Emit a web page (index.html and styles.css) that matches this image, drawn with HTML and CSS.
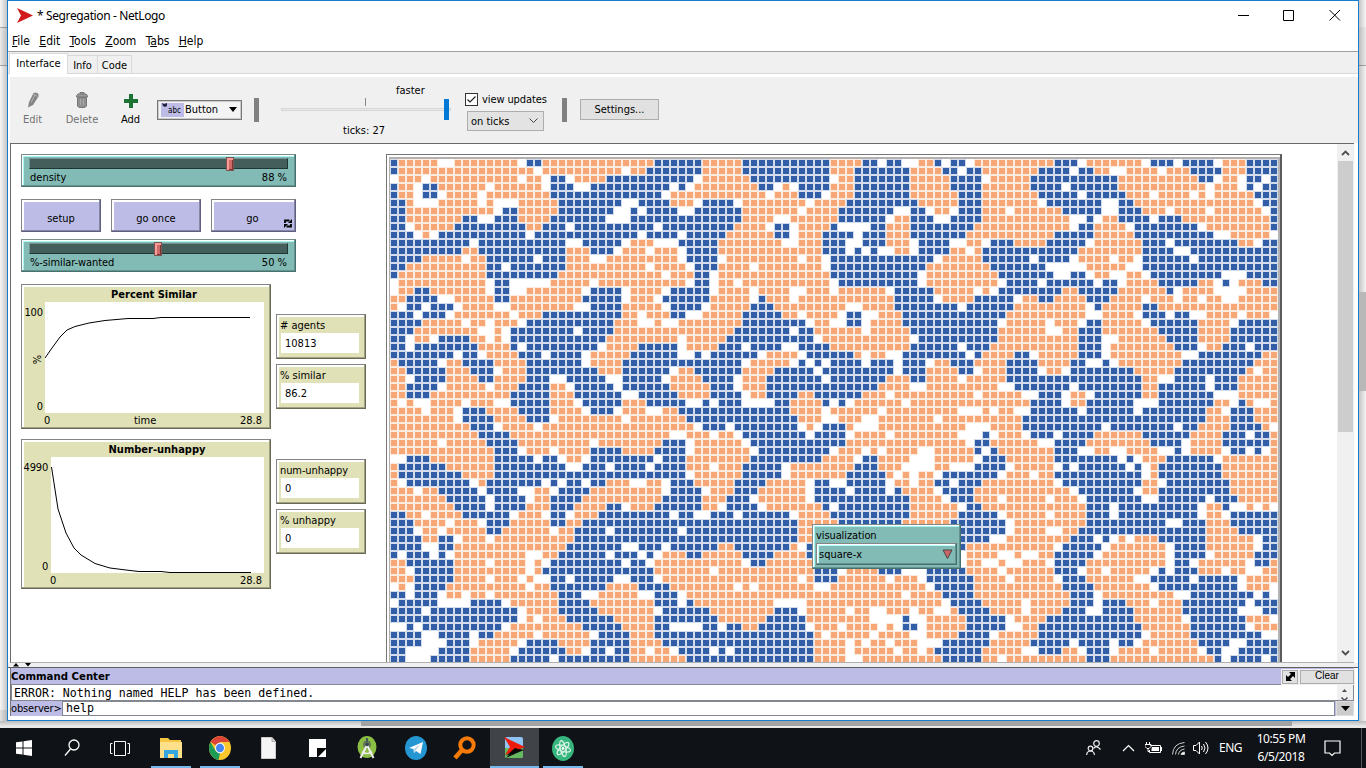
FILE: index.html
```html
<!DOCTYPE html>
<html lang="en">
<head>
<meta charset="utf-8">
<title>Segregation - NetLogo</title>
<link rel="stylesheet" href="styles.css">
</head>
<body>
<div class="desktop">
  <div class="back-left"></div>
  <div class="back-right"><span class="back-thumb"></span></div>
  <div class="back-bottom"><span class="back-scroll"></span></div>

  <main class="window">
    <header class="titlebar">
      <svg class="app-icon" width="16" height="15" viewBox="0 0 16 15"><path d="M0 0L16 7.500L0 15L4 7.500Z" fill="#d11a1c"/></svg>
      <span class="title-text">* Segregation - NetLogo</span>
      <svg class="win-buttons" width="110" height="14" viewBox="0 0 110 14" fill="none" stroke="#000"><path d="M1 7.500H12M46.500 2.500H56.500V12.500H46.500ZM92.500 2L103 12.500M103 2L92.500 12.500"/></svg>
    </header>
    <nav class="menubar"><span><u>F</u>ile</span><span><u>E</u>dit</span><span><u>T</u>ools</span><span><u>Z</u>oom</span><span>T<u>a</u>bs</span><span><u>H</u>elp</span></nav>
    <div class="tabs"><span class="tab active">Interface</span><span class="tab info">Info</span><span class="tab code">Code</span></div>

    <section class="toolbar">
      <div class="tool edit off">
        <svg width="12" height="16" viewBox="0 0 12 16"><path d="M1 15.500L2 10L6.500 1L9 .500L11.500 2V4.500L6 13Z" fill="#858585"/><path d="M4 10.500L8 3M6.500 2L10.500 4.500" stroke="#b5b5b5" fill="none"/></svg>
        <span>Edit</span>
      </div>
      <div class="tool delete off">
        <svg width="12" height="16" viewBox="0 0 12 16"><path d="M4 2V.500H8V2M.500 3.500L2 2H10L11.500 3.500V5H.500Z" fill="#999" stroke="#777"/><path d="M1.500 5.500H10.500V14L9 15.500H3L1.500 14Z" fill="#8f8f8f" stroke="#777"/><path d="M4.500 7V13M7.500 7V13" stroke="#aaa"/></svg>
        <span>Delete</span>
      </div>
      <div class="tool add">
        <svg width="14" height="14" viewBox="0 0 14 14"><path d="M5 0H9V5H14V9H9V14H5V9H0V5H5Z" fill="#1b7434"/></svg>
        <span>Add</span>
      </div>
      <div class="widget-combo">
        <span class="abc"><svg width="6" height="5" viewBox="0 0 6 5"><path d="M0 0L2 1L5 0V3L3 4L1 3Z" fill="#224"/></svg>abc</span>
        <span class="combo-text">Button</span>
        <svg width="8" height="5" viewBox="0 0 8 5"><path d="M0 0H8L4 5Z"/></svg>
      </div>
      <i class="sep"></i>
      <div class="speed">
        <span class="faster">faster</span>
        <div class="speed-track"><i class="speed-tick"></i><i class="speed-thumb"></i></div>
        <span class="ticks">ticks: 27</span>
      </div>
      <div class="updates">
        <label class="check"><svg width="13" height="13" viewBox="0 0 13 13"><rect x=".5" y=".5" width="12" height="12" fill="#fff" stroke="#333"/><path d="M2.500 6.500L5 9L10.500 3.500" fill="none" stroke="#222" stroke-width="1.200"/></svg><span>view updates</span></label>
        <div class="update-mode"><span>on ticks</span><svg width="9" height="6" viewBox="0 0 9 6" fill="none" stroke="#444"><path d="M.500 .500L4.500 4.500L8.500 .500"/></svg></div>
      </div>
      <i class="sep second"></i>
      <div class="settings">Settings...</div>
    </section>

    <section class="canvas">
      <div class="w slider s1"><div class="channel"><i class="knob k88"></i></div><p><span>density</span><span>88 %</span></p></div>
      <div class="w button b1"><span>setup</span></div>
      <div class="w button b2"><span>go once</span></div>
      <div class="w button b3"><span>go</span>
        <svg class="forever" width="8" height="9" viewBox="0 0 8 9"><path d="M1 4V1.500H5.500M7 5V7.500H2.500" fill="none" stroke="#000" stroke-width="1.800"/><path d="M4 4H8V0ZM4 5H0V9Z"/></svg></div>
      <div class="w slider s2"><div class="channel"><i class="knob k50"></i></div><p><span class="tight">%-similar-wanted</span><span>50 %</span></p></div>

      <div class="w plot p1">
        <h2>Percent Similar</h2>
        <div class="plot-body">
          <div class="y-axis"><span>100</span><span class="y-name">%</span><span>0</span></div>
          <svg width="219" height="111" viewBox="0 0 219 111"><rect width="219" height="111" fill="#fff"/><path d="M0 56L7 46L15 35L22 28L30 24.500L44 21L60 18.500L83 16.500H108L116 15.500H205" fill="none" stroke="#000"/></svg>
        </div>
        <div class="x-axis"><span>0</span><span>time</span><span>28.8</span></div>
      </div>
      <div class="w plot p2">
        <h2>Number-unhappy</h2>
        <div class="plot-body">
          <div class="y-axis"><span>4990</span><span>0</span></div>
          <svg width="213" height="116" viewBox="0 0 213 116"><rect width="213" height="116" fill="#fff"/><path d="M.500 10L7 52L15 76L23 91L30 98L44 106.500L59 111L75 113L88 114.500H110L119 115.500H200" fill="none" stroke="#000"/></svg>
        </div>
        <div class="x-axis"><span>0</span><span>28.8</span></div>
      </div>

      <div class="w monitor m1"><span># agents</span><b>10813</b></div>
      <div class="w monitor m2"><span>% similar</span><b>86.2</b></div>
      <div class="w monitor m3"><span class="tight">num-unhappy</span><b>0</b></div>
      <div class="w monitor m4"><span>% unhappy</span><b>0</b></div>

      <div class="view"><svg id="world" width="888" height="504" viewBox="0 0 888 504" shape-rendering="crispEdges"></svg></div>

      <div class="w chooser"><span class="tight">visualization</span><div class="choice"><span>square-x</span><svg width="11" height="11" viewBox="0 0 11 11"><path d="M1 1H10L5.500 9.500Z" fill="#cc6666" stroke="#444"/></svg></div></div>

      <div class="scrollbar"><svg width="9" height="6" viewBox="0 0 9 6"><path d="M1 5L4.500 1.500L8 5" fill="none" stroke="#505050" stroke-width="1.800"/></svg><i></i><svg width="9" height="6" viewBox="0 0 9 6"><path d="M1 1L4.500 4.500L8 1" fill="none" stroke="#505050" stroke-width="1.800"/></svg></div>
    </section>

    <div class="divider"><svg width="20" height="4" viewBox="0 0 20 4"><path d="M0 3.500L3 0L6 3.500ZM12 0H18L15 3.500Z"/></svg></div>
    <section class="command">
      <div class="command-head"><strong>Command Center</strong>
        <span class="expand"><svg width="9" height="9" viewBox="0 0 9 9"><path d="M3 0H9V6L7 4L4 7L6 9H0V3L2 5L5 2Z"/></svg></span>
        <span class="clear">Clear</span></div>
      <div class="output"><span>ERROR: Nothing named HELP has been defined.</span>
        <svg width="16" height="15" viewBox="0 0 16 15"><rect width="16" height="15" fill="#f0f0f0"/><path d="M5 7L7.500 4L10 7Z" fill="#505050"/><path d="M4.500 12.500L7.500 15.500L10.500 12.500" fill="none" stroke="#505050" stroke-width="1.500"/></svg></div>
      <div class="prompt"><label>observer&gt;</label><div class="entry">help</div><span class="history"><svg width="9" height="5" viewBox="0 0 9 5"><path d="M0 0H9L4.500 5Z"/></svg></span></div>
    </section>
  </main>

  <footer class="taskbar">
    <div class="task"><svg width="16" height="16" viewBox="0 0 16 16" fill="#fff"><path d="M0 2.300L6.500 1.400V7.500H0ZM7.500 1.200L16 0V7.500H7.500ZM0 8.500H6.500V14.600L0 13.700ZM7.500 8.500H16V16L7.500 14.800Z"/></svg></div>
    <div class="task search"><svg width="16" height="18" viewBox="0 0 16 18" fill="none" stroke="#fff" stroke-width="1.300"><circle cx="10" cy="6" r="5"/><path d="M6.500 10L1 16.500"/></svg></div>
    <div class="task overview"><svg width="20" height="16" viewBox="0 0 20 16" fill="none" stroke="#fff"><path d="M4.500 1.500H15.500V15.500H4.500ZM2.500 3.500H.500V13.500H2.500M17.500 3.500H19.500V13.500H17.500"/></svg></div>
    <div class="task open explorer"><svg width="22" height="20" viewBox="0 0 22 20"><path d="M0 0H8L10 2H21V20H0Z" fill="#f5c643"/><path d="M0 4H22V20H0Z" fill="#ffe08a"/><path d="M4 12H18V20H14V16H8V20H4Z" fill="#35a6e0"/></svg></div>
    <div class="task open chrome"><svg width="22" height="24" viewBox="0 0 22 22" preserveAspectRatio="none"><circle cx="11" cy="11" r="11" fill="#fbc72d"/><path d="M11 11L1.500 5.500A11 11 0 0 1 20.500 5.500H11Z" fill="#dc4437"/><path d="M1.500 5.500L6.500 13.500L11 16L9.500 21.900A11 11 0 0 1 1.500 5.500Z" fill="#1c9c57"/><circle cx="11" cy="11" r="5" fill="#f5f5f5"/><circle cx="11" cy="11" r="4" fill="#4584ee"/></svg></div>
    <div class="task"><svg width="15" height="22" viewBox="0 0 15 22"><path d="M.500 .500H11L14.500 4.500V21.500H.500Z" fill="#f5f5f5" stroke="#ccc"/><path d="M11 .500V4.500H14.500" fill="#ddd" stroke="#aaa"/></svg></div>
    <div class="task"><svg width="17" height="18" viewBox="0 0 17 18"><path d="M0 0H17V18H0Z" fill="#fff"/><path d="M8 18V9H17V10L9 18Z" fill="#05070a"/></svg></div>
    <div class="task"><svg width="20" height="24" viewBox="0 0 20 24"><ellipse cx="10" cy="11" rx="9.500" ry="11" fill="#8abf43"/><circle cx="10" cy="8.500" r="4" fill="#657a55"/><path d="M9 2H11V6H9Z" fill="#455a64"/><path d="M10 9L3.500 22M10 9L16.500 22" stroke="#eee" stroke-width="2"/><path d="M5 16Q10 19 15 16" fill="none" stroke="#eee" stroke-width="1.500"/><circle cx="10" cy="8.500" r="1.800" fill="#37474f"/></svg></div>
    <div class="task"><svg width="22" height="24" viewBox="0 0 22 24"><ellipse cx="11" cy="12" rx="11" ry="12" fill="#2497d3"/><path d="M4 12L18 6L15.500 18L11 15L9 17L8.500 13Z" fill="#fff"/><path d="M8.500 13L16 8L10.500 14.500L9 17Z" fill="#b8d6e8"/></svg></div>
    <div class="task"><svg width="24" height="24" viewBox="0 0 24 24" fill="none" stroke="#f67a08"><circle cx="14" cy="9" r="6.700" stroke-width="4"/><path d="M9 14L2 22" stroke-width="4.500"/></svg></div>
    <div class="task current"><svg width="22" height="22" viewBox="0 0 22 22"><rect x="1" y="0" width="18" height="21" rx="2" fill="#8fc4f4"/><path d="M1 11H19V20L17 21H2L1 20Z" fill="#65b95f"/><path d="M2 21L12 11L20 13L13 16Z" fill="#111"/><path d="M0 0L21 10L1 18L6 10Z" fill="#ee1b0d"/><path d="M2 19L11 11L17 13Z" fill="#070707"/></svg></div>
    <div class="task open"><svg width="22" height="25" viewBox="0 0 24 26" preserveAspectRatio="none"><ellipse cx="12" cy="13" rx="12" ry="13" fill="#36b67e"/><g fill="none" stroke="#dff5e9" stroke-width="1.200"><ellipse cx="12" cy="13" rx="8.500" ry="3" transform="rotate(15 12 13)"/><ellipse cx="12" cy="13" rx="8.500" ry="3" transform="rotate(75 12 13)"/><ellipse cx="12" cy="13" rx="8.500" ry="3" transform="rotate(-45 12 13)"/></g><circle cx="12" cy="13" r="1.500" fill="#fff"/></svg></div>
    <div class="tray">
      <svg class="people" width="15" height="16" viewBox="0 0 15 16" fill="none" stroke="#eee" stroke-width="1.200"><circle cx="10.500" cy="3.500" r="2.800"/><circle cx="4.500" cy="8.500" r="2.300"/><path d="M7.500 8.500Q10.500 5 14.500 9.500M.600 15Q1 11 4.500 11T8.500 15"/></svg>
      <svg class="chev" width="13" height="8" viewBox="0 0 13 8" fill="none" stroke="#fff" stroke-width="1.200"><path d="M1 7L6.500 1.500L12 7"/></svg>
      <svg class="battery" width="17" height="13" viewBox="0 0 17 13"><path d="M5.500 3.500H15.500V10.500H4.500V8" fill="none" stroke="#fff"/><path d="M7 5H14V9H6.500V7ZM16 5H17V9H16Z" fill="#fff"/><path d="M1.500 0V2.500M4.500 0V2.500M0 2.500H6V4.500L4 6.500H2L0 4.500ZM3 6V9.500H5" fill="none" stroke="#fff"/></svg>
      <svg class="wifi" width="13" height="13" viewBox="0 0 13 13" fill="none" stroke="#ccc"><path d="M.500 12.500Q1 1.500 12.500 .500M3.500 12.500Q4 5 12.500 4M6.500 12.500Q7 8 12.500 7"/><path d="M9 12.500Q9.500 10 12.500 10V12.500Z" fill="#fff"/></svg>
      <svg class="sound" width="17" height="14" viewBox="0 0 17 14" fill="none" stroke="#fff"><path d="M.500 4.500H3L6.500 1V13L3 9.500H.500ZM8.500 5Q10 7 8.500 9M10.500 3Q13.500 7 10.500 11M12.500 1Q17.500 7 12.500 13"/></svg>
      <span class="lang">ENG</span>
      <span class="clock"><span>10:55 PM</span><span>6/5/2018</span></span>
      <svg class="notice" width="17" height="17" viewBox="0 0 17 17" fill="none" stroke="#fff" stroke-width="1.200"><path d="M1 1H16V13H10.500L8 15.500L5.500 13H1Z"/></svg>
      <i class="show-desktop"></i>
    </div>
  </footer>
</div>
<script src="world.js"></script>
</body>
</html>
```
FILE: styles.css
```css
* { box-sizing: border-box; }
body { margin: 0; width: 1366px; height: 768px; overflow: hidden; font: 11px/13px "DejaVu Sans Condensed", "DejaVu Sans", sans-serif; font-stretch: condensed; color: #000; }
svg { display: block; flex: none; }
span { white-space: nowrap; }
.tight { letter-spacing: -.1px; }
.desktop { position: relative; width: 1366px; height: 768px; background: #e9e9e9; overflow: hidden; }
.back-left { position: absolute; left: 0; top: 0; width: 7px; height: 728px; background: linear-gradient(90deg, transparent, #0003), linear-gradient(#f6f6f6 27px, #aaa 27px 28px, #ebebeb 28px 65px, #aaa 65px 66px, #f7f7f7 66px 710px, #e3e3e3 710px); }
.back-right { position: absolute; right: 0; top: 0; width: 7px; height: 728px; background: linear-gradient(90deg, #0003, transparent), linear-gradient(#f7f7f7 27px, #ebebeb 27px 65px, #aaa 65px 66px, #f4f4f4 66px); }
.back-thumb { display: block; width: 7px; height: 99px; margin-top: 292px; background: #b8b8b8; }
.back-bottom { position: absolute; left: 0; top: 721px; width: 1366px; height: 7px; background: linear-gradient(#bbb, #e8e8e8 5px); }
.back-scroll { display: block; width: 931px; height: 5px; margin-left: 361px; background: #a3a3a3; }

.window { position: absolute; left: 7px; top: 0; width: 1352px; height: 721px; border: 1px solid #187ccc; background: #fff; display: flex; flex-direction: column; }
.titlebar { height: 30px; display: flex; align-items: center; padding: 0 11px 0 9px; font: 12px/16px "Noto Sans", sans-serif; }
.title-text { margin-left: 4px; letter-spacing: -.38px; flex: 1; }
.app-icon { margin-top: -1px; }
.win-buttons { margin-top: -2px; }
.menubar { height: 21px; border-bottom: 1px solid #a0a0a0; display: flex; gap: 9.300px; padding: 3px 0 0 4px; font: 12px/14px "DejaVu Sans Condensed", sans-serif; }
.menubar u { text-underline-offset: 1px; }
.tabs { height: 25px; display: flex; align-items: flex-end; background: linear-gradient(#f0f0f0 21px, #d9d9d9 21px 22px, #fff 22px); padding: 0 0 3px 1px; }
.tab { height: 19px; border: 1px solid #d9d9d9; text-align: center; line-height: 19px; margin-left: -1px; width: 31px; }
.tab.code { width: 35px; }
.tab.active { height: 21px; width: 59px; background: #fff; border-bottom: 0; line-height: 20px; margin-left: 0; }

.toolbar { height: 66px; margin-left: 2px; background: #f0f0f0; display: flex; align-items: center; padding-left: 12px; }
.tool { display: flex; flex-direction: column; align-items: center; gap: 5px; height: 34px; justify-content: flex-end; margin-top: -3px; }
.edit { width: 21px; } .delete { width: 32px; margin-left: 23px; } .add { width: 21px; margin-left: 22px; }
.off { color: #707070; }
.widget-combo { margin: -1px 0 0 16px; width: 85px; height: 20px; border: 1px solid #777; box-shadow: inset 0 0 0 1px #ccc; background: #f4f4f4; display: flex; align-items: center; padding-left: 3px; }
.abc { width: 23px; height: 14px; background: #bcbce6; font-size: 8px; line-height: 16px; display: flex; padding-left: 1px; }
.combo-text { margin: 0 0 0 1px; width: 44px; }
.sep { width: 5px; height: 24px; background: #808080; margin-left: 12px; }
.speed { width: 170px; height: 66px; margin-left: 22px; display: grid; grid-template-rows: 20px 24px 1fr; }
.faster { margin: 7px 0 0 115px; }
.ticks { margin: 3px 0 0 62px; }
.speed-track { height: 3px; margin-top: 11px; border: 1px solid #d6d6d6; background: #e7eaea; position: relative; }
.speed-tick { position: absolute; left: 83px; top: -11px; width: 1px; height: 8px; background: #888; }
.speed-thumb { position: absolute; left: 162px; top: -10px; width: 5px; height: 21px; background: #0078d7; }
.updates { margin: 4px 0 0 14px; display: flex; flex-direction: column; gap: 5px; width: 82px; }
.check { display: flex; gap: 4px; letter-spacing: -.1px; }
.update-mode { margin-left: 2px; width: 77px; height: 20px; border: 1px solid #adadad; background: #e3e3e3; display: flex; align-items: center; justify-content: space-between; padding: 0 5px 0 3px; }
.second { margin-left: 15px; }
.settings { margin: -2px 0 0 13px; width: 79px; height: 21px; border: 1px solid #adadad; background: #e1e1e1; text-align: center; line-height: 19px; }

.canvas { position: relative; height: 520px; margin: 0 4px 0 2px; border-top: 1px solid #696969; border-left: 1px solid #696969; border-bottom: 1px solid #b0b0b0; overflow: hidden; }
.w { position: absolute; border: 1px solid; }
.slider { left: 10px; width: 275px; height: 33px; background: #82bab5; border-color: #7b8d8b #47716d #47716d #7b8d8b; box-shadow: inset -1px -1px #64938f, inset 1px 1px #fff, inset 2px 2px #a9f3f3; padding: 3px 7px 0 7px; }
.s1 { top: 10px; } .s2 { top: 95px; }
.channel { position: relative; height: 11px; background: #435e5b; border: 1px solid #749390; border-right-color: #1e3634; border-bottom-color: #1e3634; }
.knob { position: absolute; top: -2px; width: 8px; height: 14px; background: #cc6b68; border: 1px solid #7f5554; box-shadow: inset 2px 2px #f99b97, inset -1px -1px #7d3634; }
.k88 { left: 196px; } .k50 { left: 124px; }
.slider p { margin: 2px 1px 0; display: flex; justify-content: space-between; }
.button { top: 55px; height: 33px; background: #bcbce6; border-color: #858585 #5f5f82 #5f5f82 #858585; box-shadow: inset -1px -1px #8686a5, inset 2px 2px #fff; display: flex; align-items: center; justify-content: center; padding-top: 5px; }
.b1 { left: 10px; width: 80px; } .b2 { left: 100px; width: 90px; } .b3 { left: 200px; width: 85px; padding-right: 2px; }
.forever { position: absolute; right: 3px; bottom: 3px; }
.plot { left: 10px; width: 250px; background: #e0e1b6; border-color: #858585 #6a6a54 #6a6a54 #858585; box-shadow: inset -1px -1px #a0a184, inset 2px 2px #fff; padding: 2px 6px 0 3px; display: flex; flex-direction: column; }
.p1 { top: 140px; height: 145px; } .p2 { top: 295px; height: 150px; }
.plot h2 { font-size: 11px; font-weight: bold; text-align: center; margin: 0; height: 15px; padding-left: 19px; line-height: 15px; }
.p2 h2 { padding-left: 25px; line-height: 16px; }
.plot-body { display: flex; justify-content: flex-end; }
.y-axis { flex: 1; display: flex; flex-direction: column; justify-content: space-between; align-items: flex-end; padding: 4px 2px 0 0; }
.p1 .y-axis { padding-right: 2px; letter-spacing: -.1px; }
.p2 .y-axis { padding: 4px 3px 0 0; letter-spacing: -.2px; }
.y-name { transform: rotate(-90deg); margin: 0 1px 0 0; }
.x-axis { display: flex; justify-content: space-between; padding: 1px 2px 0 19px; }
.p2 .x-axis { padding-left: 25px; }
.monitor { left: 265px; width: 90px; height: 45px; background: #e0e1b6; border-color: #858585 #6a6a54 #6a6a54 #858585; box-shadow: inset -1px -1px #a0a184, inset 2px 2px #fff; padding: 4px 6px 5px 4px; display: flex; flex-direction: column; gap: 1px; }
.monitor span { height: 13px; line-height: 14px; margin-left: -1px; }
.monitor b { font-weight: normal; background: #fff; height: 20px; line-height: 22px; padding-left: 4px; }
.m1 { top: 170px; } .m2 { top: 220px; } .m3 { top: 315px; } .m4 { top: 365px; }
.view { position: absolute; left: 375px; top: 10px; width: 896px; height: 540px; border: 1px solid #777; border-right: 2px solid #5b5b5b; padding: 4px 0 0 3px; background: #fff; box-shadow: inset 2px 2px #fff, inset 3px 4px #b4b0b0, inset -2px 0 #b4b4b4; }
.chooser { left: 801px; top: 380px; width: 149px; height: 45px; background: #82bab5; border-color: #7b8d8b #47716d #47716d #7b8d8b; box-shadow: inset -1px -1px #64938f, inset 1px 1px #fff, inset 2px 2px #a9f3f3; padding: 4px 3px; line-height: 13px; }
.choice { margin-top: 1px; height: 22px; border: 1px solid; border-color: #858585 #47716d #47716d #858585; box-shadow: inset -1px -1px #64938f, inset 1px 1px #fff, inset 2px 2px #b8ffff; display: flex; justify-content: space-between; align-items: center; padding: 1px 3px 0 2px; }
.scrollbar { position: absolute; right: 0; top: 0; width: 17px; height: 518px; background: #f0f0f0; display: flex; flex-direction: column; align-items: center; padding: 6px 0; }
.scrollbar i { width: 15px; height: 271px; margin: 5px 0 auto; background: #cdcdcd; }

.divider { height: 5px; background: #f0f0f0; border-bottom: 1px solid #5f5f5f; padding-left: 5px; overflow: hidden; }
.command { margin: 0 4px 0 2px; height: 48px; border-left: 1px solid #777; background: #bcbce6; }
.command-head { height: 16px; display: flex; align-items: center; padding-top: 1px; }
.command-head strong { flex: 1; font-size: 11.300px; }
.expand { width: 16px; height: 14px; background: #e1e1e1; border: 1px solid #adadad; box-shadow: 0 0 0 1px #f0f0f0; display: grid; place-items: center; }
.clear { width: 54px; height: 14px; margin-left: 2px; background: #e1e1e1; border: 1px solid #adadad; box-shadow: 0 0 0 1px #f0f0f0; font: 10px/10px "Liberation Sans", sans-serif; text-align: center; }
.output { height: 17px; background: #fff; border: 1px solid #828790; display: flex; justify-content: space-between; padding-left: 2px; font: 11.600px/16px "DejaVu Sans Mono", monospace; }
.prompt { height: 15px; display: flex; }
.prompt label { width: 51px; line-height: 15px; letter-spacing: -.15px; }
.entry { flex: 1; border: 1px solid #828790; background: #fff; padding-left: 3px; font: 11.600px/12px "DejaVu Sans Mono", monospace; }
.history { width: 18px; background: #ccc; margin-left: 1px; display: grid; place-items: center; border: 1px solid #ddd; }

.taskbar { position: absolute; left: 0; top: 728px; width: 1366px; height: 40px; background: #0f1216; display: flex; color: #fff; }
.task { width: 49px; height: 40px; display: flex; align-items: center; justify-content: center; padding-right: 2px; }
.search { padding-right: 4px; }
.overview { padding-right: 6px; }
.open { background: linear-gradient(#76b9ed, #76b9ed) 4px 100% / 40px 2px no-repeat; }
.current { background: linear-gradient(#76b9ed, #76b9ed) 0 100% / 100% 2px no-repeat #404347; padding: 0; }
.tray { margin-left: auto; width: 282px; display: flex; align-items: center; font: 12px/18px "Noto Sans", sans-serif; }
.people { margin-left: 2px; } .chev { margin-left: 21px; } .battery { margin-left: 10px; } .wifi { margin-left: 10px; } .sound { margin-left: 8px; }
.lang { margin-left: 9px; width: 25px; letter-spacing: -.5px; }
.clock { width: 74px; display: flex; flex-direction: column; text-align: center; letter-spacing: -.4px; }
.notice { margin: 0 0 0 6px; }
.show-desktop { margin-left: auto; margin-right: 4px; width: 1px; height: 40px; background: #555; }
```
FILE: world.js
```js
// Each row lists runs of patches: b = blue turtle, o = orange turtle, w = empty.
const rows = [
"b1o5w2o8w1b2o14b4 b2o5b11o4b2w1b2w2o2b1w1b2w1o1 o9b3w1o7w1b3w1b4w1o3b4",
"b1o17w1o10w1o2b5 b2o5b11o3b7o4b2w1b2 o7b4w1b2o2w2o4w1o3b4o3b4",
"w1o3w1o11w1o2w1b2w1o4b10 b1w1o6b10w1o2b7o5b4 w1o5b11o10b2w1o2w1b2w1b1",
"b1o2w1b2o6w1o6w1b3w2b10w1b1 w1o8b2w1o1w1b4o3b7o5b4 o6b4w1b6o11w1o3w1b1w1b2",
"b1o2w1b2w1o4w1o8b14w1o2 o10w1o3b3w1o3b7o6b3 o7b5w1b5o3w1o4w1o1w1o5b3",
"b2o1w3o5w1o1w3o5b8w2b4o2 o1w1b4w1o8w1o4b9o5b3 o7w1b7w2b2o15w1b2",
"b2o11w1b2o5b7w2b1w1b4w1 w1b6o7w1o4b7w2b2w1o2w1b3 o3w1o6b5w2b3o3w1o4w1o6w1b1",
"b2o7b2w2b3o4b7w3b7 b7o4w2o6b6w1o2b3w2b4 o11w2b1w1o2b4w1b3o11b1",
"b2w1o5b9o2b3w1b10w1b3 b6o4w1b2w1o4b1w4b2o3b8o1 o11w1b2o4w1b8w1o8b1",
"b3w1o1w1b11w1b13w1b4w1 b5o6b2w1o3b4w1b3o3b7o2 o9b5o5b10w2o5w1",
"b10w1b11w2b5w1o3w3b1 b4o8w2o3b3w2b3o3w1b4w2o2 w1b3o4b5w1o6b3w1b8o2w1b2",
"b9o2b11o3b3w1o3w1o3w1 b4o13b3w1b1w1b1w2o2w1b4o2w1o1 b12o8b4w2b11",
"b4o5w1o2b6w1b3o3w2o9w1 b4w1o9w1o2w1b13w1o5 b6w1b4w1o4w1o2w1b6w1b10",
"b2o10b2w1b7o10w1o4 w1b3o4w1o8w1b12o7 o1b7w5o5w2b17",
"b1o11b9o13w1o2 o1b2w1o14b11w1o7 o2b7w2b2w1o2w2o2w1b9w3b4",
"w1o11w1b2w5o5w1o11 w1b2w1o2w1o11w1b10w1o7 o2w1b4w1b6w1b2w1o4b5o2w1b1w1o3b2",
"w1o2b2o7w1b2w2o7w1b4w1o4w1b2 b3w1o4w1o4w2o3w1o6w1b5o5w1 o1w1b8o2b5o6b1w1o4w4o4",
"o2b4w2o5b2o9b5w1o3w1b3 b3o5w1b1o3w1o12b5w1o4b1 b4w1o2b2o4b3o4w1o3w1o2w1o2w2o5",
"o1w1b2w1b3w1o4w2o8w2b4o5w1b2 b2w1o5b3o9w2o4b8w1b2 b4o9w1b1o5b2o15",
"b3w1b3w1o7w1o3b10o2w1o3b2 w2o5b5o2w1o4w1b2w2o3b10 b3o10w2o4w1b3w1b2w2o4w1o3w1",
"b4o5w1o2w1o3w1b11o3w2o1w2o1 o7b8w1o2w2b2w1o4b10 b2w1o5w1o3w1b2o5w1b6o4w1b5",
"b3o8w2o1w1b8w1b4o9 o6b7w1b2o6w1o5b9 b2o6w2o2b3o7b5o4b6",
"b2w1o2w1b4o2w1o1w1b12o9w1 o5b11w1o11w1b8 b2o10b3w2o6b4o4b6",
"b2w1b8o4b1w1b9w1o4b5w1 o4b3w1b4w2b4o10b6w1b2 b1o11b3w1o8b3w1o2b3w1b3",
"b8w1b2w1o4b3w1b4w1o5b6w1 w1b1w1b6w1o4w1b6o1w1o2w2b8w1b1 o4b2w1o5b3w1o9w2b8o2",
"o1b5w1o2b4o4b7w1o4b8 b7w1o5w1b1w1b1w1b4w1b3w1b3w1o2b3o1 o3b4o4b2w2b1w1o8b9o3",
"o2b5o3b3w1o3b9o3b6w1o1 o1b6o4b5w1b9w1b3o4b2w1 o3b4w1o2w1b8o5b9o1w1o2",
"o2w1b4o4b2o4b3w2b5w2b5w1o2 o2b4w1o3b7w1b7o3b2o4w1o2 o3b17o2w2b4w1b3o5",
"o2b4w1o5w1o3b4o2w1b5w1b6o2 o3b3w1o3b14o4w2o7 o2w2b7w1b8o2b6w1b3o5",
"o2b3o10b5o3b6w2b5o1 o3b4w1o2b4o2b6o3w1o10w1 o5w2b3w1o2w1b6o2b7w3o5",
"o1w1o1w2o4w1o3w2b5o3w1b5o3b5 w2b1w1b3w4b2o4b1w1b1w1o6w1o9 o6b4w1o2b6w3b7o2w1b1o1w2o1",
"o4w1o3w1b3o4b4o4w1b3w1o3w2o2b1 b13o4w1o6w1o9w3 o1w1o2w2b6w1b6w1b8o2w1b3o3",
"o8w1b4o4b3w1o8w1o7 b14o3w2o3w2o7w1o5 o5b23o3b3o3",
"o10b3w1o4w1o18 o1w1b3w1b8w1o1w1b3o1w3o11w2 w1o4b10w1b8w1b2o4b4o1w1",
"o11b4o20w2 o3w1o2w1b8w1b4w1o4w1o8w3 b1w1o3w1b3w1b4o6b6o4b3w1b2o1",
"o6w1o5b4o9w1o8b3 w1o6w1b12o15w1b1 b1o6w2b4o8b4w1o4b6o1",
"o13b3w1o3w1o4b4o4b4 w1o7w1b9w1o3w1o1w1o4w2o5b1 w1b1o7b3w2o2w2o4w2b1w1o4w1b2w1b1w1o1",
"w2b3o8b5w1b2w1o2w1b8w1b3 o8b9o4w1b2o4w3o5w1 b3o6b8w1b1w1o3b6w1o7",
"o1b6o6b9w2b3w1b4w1b4 o3w1o3b5w1o8b3o3w4o2w3b1 b3w1o5w1b1w1b6w1b1w1o1b8o7",
"o1b8o4b24 w1o6b5w1o7b5o1w1o1w1o2w1b5 b2w1o3w1o2b11w1o1b8o7",
"o1w1b8w1o1b7w1b1w1b2w1b2o3w2o2w1b2 b1o5b4o5w1b2w2b5w1o2w1o2b2w1b3 o9w1b10o2w1b8o6",
"o3w1o2b5w1b4w2o2w1b4o9w1b2 b2w1o3b3o6w1b4w1b4w1b1o4w1b4o1 o11w1b7w1o2b9o6",
"o7b5w1b4w1o2b4o10b3 b2o3b3w1o6w1b12o4w1b3o1 o2w1o5w1o3w1b7w2b6w1b3o5",
"o8b4w1b4o3b3o4b2w1o3b4 b2o2w1b4w1o7b1w1b9o6w1b2 o13b3w1b10w1o2b1w2o1w1o1w1",
"b2o2w1o4b6w1o3w1b2w1o3b9w1b1 b1w2b3w1b6w1o4b10o6b3 b2w1o5w1o4b3w1b10w1o2w1b6",
"b3o4w1o3w1b3o5b2o2b13 b14o5b8o6b4 b3w1o9b10w2b3o3b6",
"b3w1o2w1o5b2o6w1o2b4w1b8w1 b14o2w18b3 b3w1o4w2o2b16o4b5",
"b4o2b2w1o3w1o10b14 b14o2w18b3 b1w2o8b3w1b1w1o1w1o3b6o6w1b2",
"b4w2b2o14b7w2b3w1b2 b4o2b7o1w1b1w18b1o2 o9w1b5w1o7w1b4o6w1b2",
"b1w1b3w1b1w1o9w2o2b6w1b3w1b1w1o3 b2o5b4o4b1w18w1o2 o2w2o1w2o2b5w1o8w1b4w1o5b3",
"o2b6o4w1o4w1o1w1b9w1b2w1o4 o7w1b2o6w18w1o2 w2o1w2o3w1b4o10w1b2w1o6w1b2o1",
"o2w1b5o9w1o1b14o4 o3w1o12b3w1o4b3w3b5o2 o2w1o6b3w1o2w1o5w1b1w1b3o3w1o2w2o2",
"o3b5o4w1o3w1o1w2b2w1b5w2b3w1o3 o14w1o1b3o6w1o3w1b6o1 o3w1o5w1b3o6w2b5w1b5w1o4",
"w1o1w1b4o10w1o2b7o4b4o2 o6w1o1w1o7w2o12w1b5o1 o10b4o7w1b10w1o3w1",
"b2w1b3w1o2w1o2w1o8b3w2o5w2b3w1 o27w1o4b4o1 o11b3w1o9w2b8w1b1w1",
"w1b5w4b4w1o6b4o8b3w1 b1o10w4o17w1b4 o5w1o5b3w1b3o3w1o3b8w1b3",
"b4w1b11w1o4b5o7w1b3 b3o8b3w1o5w1o2w2o3w1o2w2o1b3 b1o4w1o4b3w2b4o6b7w3b2",
"b16w1o1w1o3b6o5b4 b4o6b5o8w4b1w2o5b2 b3w1o4b11o6w1b7o3w1",
"w2b1w1b10w1o9b5o4b2w2 w2b2w1b2o2b6w1o3w1o4w1o1w1b2w1o5b2 b3w2o2b13o6b7w1o3",
"b4w2b4w1b2o5w1o6w1b4o3b4 b16o1w1o5w1o4w2o4b3 b1w1o5b13w1o5b9w2",
"b4w3b3w1o5w1b4o4b5o4b3 b16o4w1o1w1o2w1o3w3b5 b1o5b5w1b4w1b2w1o7b4w2b4",
"b2w4b4o5w1b6o2w1b2w1b2o2w1o2w1b1 b3w1b1w1b10o4w1o5w1o2w1o1b6 o5w2b3o2w1b3w1o4w1o5w1b2w2b5",
"b2w3b5o5b5w1b9o7 b16o4w2o10b5 o2w1o10b3o13b1w1b4w1b1"
];

const solid = { b: "#325da7", o: "#f6a775" };
const edge = { b: "#d2dcec", o: "#fdebdf" };
const paths = { b: ["", ""], o: ["", ""] };
rows.forEach((row, y) => {
  row.split(" ").forEach((part, block) => {
    let x = block * 37;
    for (const [, kind, count] of part.matchAll(/([bow])(\d+)/g)) {
      for (let i = 0; i < +count; i++, x++) {
        if (kind === "w") continue;
        paths[kind][0] += `M${x * 8} ${y * 8}h8v8h-8z`;
        paths[kind][1] += `M${x * 8 + 1} ${y * 8 + 1}h6v6h-6z`;
      }
    }
  });
});
document.getElementById("world").innerHTML = ["b", "o"].map(k =>
  `<path fill="${edge[k]}" d="${paths[k][0]}"/><path fill="${solid[k]}" d="${paths[k][1]}"/>`).join("");
```
